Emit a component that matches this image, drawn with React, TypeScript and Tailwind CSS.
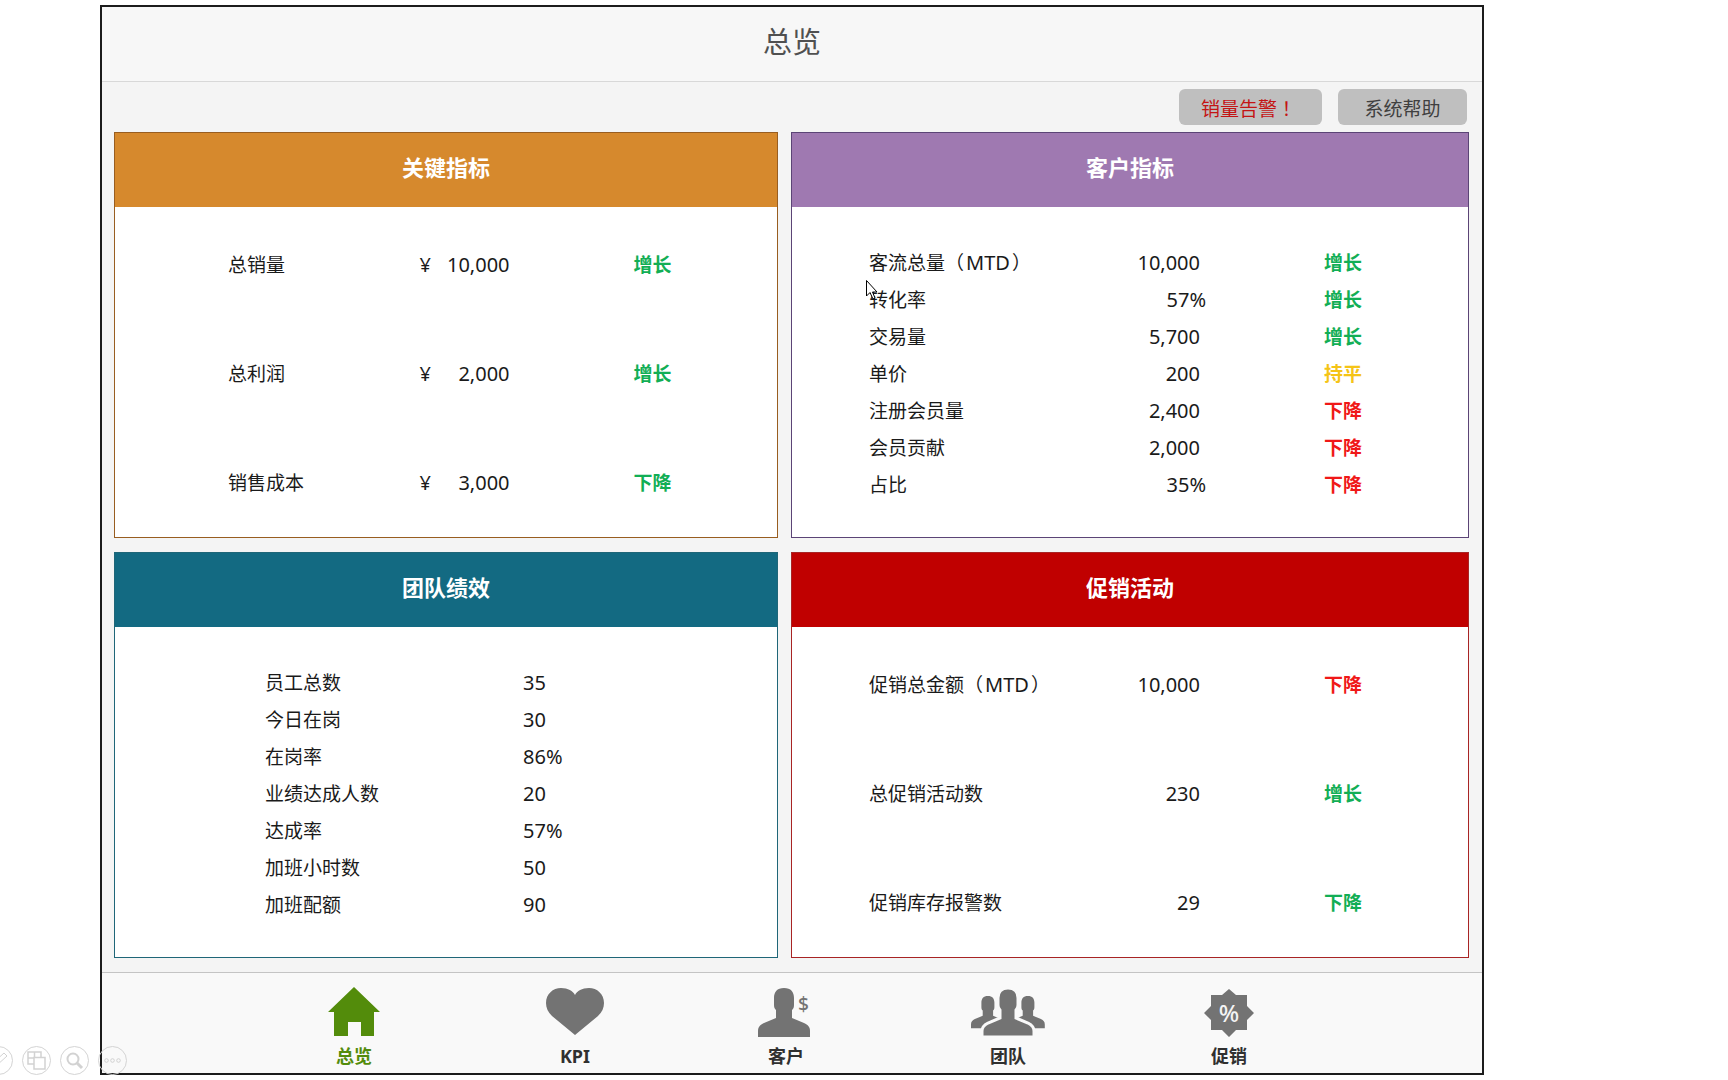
import type { ReactNode } from "react";
import clsx from "clsx";

type Tone = "green" | "yellow" | "red";

interface Metric {
  label: ReactNode;
  value: string;
  trend?: string;
  tone?: Tone;
}

const TONES: Record<Tone, string> = {
  green: "text-[#12ae55]",
  yellow: "text-[#f5c416]",
  red: "text-[#f01818]",
};

const mtd = (text: string) => (
  <>
    {text}（<span className="px-0.5 text-[20px]">MTD</span>）
  </>
);

const KEY_METRICS: Metric[] = [
  { label: "总销量", value: "10,000", trend: "增长", tone: "green" },
  { label: "总利润", value: "2,000", trend: "增长", tone: "green" },
  { label: "销售成本", value: "3,000", trend: "下降", tone: "green" },
];

const CUSTOMER_METRICS: Metric[] = [
  { label: mtd("客流总量"), value: "10,000", trend: "增长", tone: "green" },
  { label: "转化率", value: "57%", trend: "增长", tone: "green" },
  { label: "交易量", value: "5,700", trend: "增长", tone: "green" },
  { label: "单价", value: "200", trend: "持平", tone: "yellow" },
  { label: "注册会员量", value: "2,400", trend: "下降", tone: "red" },
  { label: "会员贡献", value: "2,000", trend: "下降", tone: "red" },
  { label: "占比", value: "35%", trend: "下降", tone: "red" },
];

const TEAM_METRICS: Metric[] = [
  { label: "员工总数", value: "35" },
  { label: "今日在岗", value: "30" },
  { label: "在岗率", value: "86%" },
  { label: "业绩达成人数", value: "20" },
  { label: "达成率", value: "57%" },
  { label: "加班小时数", value: "50" },
  { label: "加班配额", value: "90" },
];

const PROMO_METRICS: Metric[] = [
  { label: mtd("促销总金额"), value: "10,000", trend: "下降", tone: "red" },
  { label: "总促销活动数", value: "230", trend: "增长", tone: "green" },
  { label: "促销库存报警数", value: "29", trend: "下降", tone: "green" },
];

function Card({
  title,
  border,
  header,
  dense,
  children,
}: {
  title: string;
  border: string;
  header: string;
  dense?: boolean;
  children: ReactNode;
}) {
  return (
    <section className={clsx("border bg-white", border)}>
      <h2 className={clsx("flex h-[74px] items-center justify-center pb-1.5 text-[22px] font-bold text-white", header)}>
        {title}
      </h2>
      <div className={dense ? "pt-[37px] pb-[34px]" : "pt-[3px]"}>
        <table className="w-full table-fixed border-collapse text-[19px] leading-7">
          <tbody>{children}</tbody>
        </table>
      </div>
    </section>
  );
}

function Trend({ row, className }: { row: Metric; className: string }) {
  return (
    <td className={clsx("font-bold", className, row.tone && TONES[row.tone])}>{row.trend}</td>
  );
}

function KeyRow({ row }: { row: Metric }) {
  return (
    <tr className="h-[109px]">
      <th scope="row" className="w-[46%] pl-[113px] text-left font-normal">{row.label}</th>
      <td className="w-[90px] text-[20px]">
        <div className="flex justify-between">
          <span>¥</span>
          <span>{row.value}</span>
        </div>
      </td>
      <Trend row={row} className="pl-[124px]" />
    </tr>
  );
}

// Plain numbers leave room for the percent sign's overhang
function NumberRow({ row, height }: { row: Metric; height: string }) {
  return (
    <tr className={height}>
      <th scope="row" className="w-[50%] pl-[77px] text-left font-normal">{row.label}</th>
      <td className={clsx("w-[76px] text-right text-[20px]", !row.value.endsWith("%") && "pr-[6px]")}>
        {row.value}
      </td>
      <Trend row={row} className="pl-[118px]" />
    </tr>
  );
}

function TeamRow({ row }: { row: Metric }) {
  return (
    <tr className="h-[37px]">
      <th scope="row" className="w-[408px] pl-[150px] text-left font-normal">{row.label}</th>
      <td className="text-[20px]">{row.value}</td>
    </tr>
  );
}

const PERSON =
  "M26 0C33 0 36 4 36 10V17C36 20 35 21 34 22V30L46 35C50 37 52 39 52 43V49H0V43C0 39 2 37 6 35L18 30V22C17 21 16 20 16 17V10C16 4 19 0 26 0Z";

function HomeIcon() {
  return (
    <svg viewBox="0 0 52 50" className="h-[50px] w-[52px] fill-[#538c0b]" aria-hidden="true">
      <path d="M26 0 52 25H46V49H33V35H20V49H6V25H0Z" />
    </svg>
  );
}

function HeartIcon() {
  return (
    <svg viewBox="0 0 58 50" className="h-[50px] w-[58px] fill-[#737373]" aria-hidden="true">
      <path d="M29 48 6 29C2 25 0 21 0 16 0 7 7 1 15 1c7 0 12 3 14 7 2-4 7-7 14-7 8 0 15 6 15 15 0 5-2 9-6 13Z" />
    </svg>
  );
}

function CustomerIcon() {
  return (
    <svg viewBox="0 0 56 50" className="h-[50px] w-14 fill-[#737373]" aria-hidden="true">
      <path d={PERSON} transform="translate(0 1)" />
      <text x="40" y="24" fontSize="19" fontWeight="500" fontFamily="Noto Sans">$</text>
    </svg>
  );
}

function TeamIcon() {
  return (
    <svg viewBox="0 0 76 50" className="h-[50px] w-[76px] fill-[#737373]" aria-hidden="true">
      <path d={PERSON} transform="translate(1 9) scale(.65 .66)" />
      <path d={PERSON} transform="translate(41 9) scale(.65 .66)" />
      <path d={PERSON} transform="translate(12 1)" className="stroke-[#f9f9f9]" strokeWidth="3" />
    </svg>
  );
}

function PromoIcon() {
  return (
    <svg viewBox="0 0 50 50" className="h-[50px] w-[50px] fill-[#737373]" aria-hidden="true">
      <path d="M25 2 32 8H43V19L50 26 43 33V43H32L25 50 18 43H7V33L0 26 7 19V8H18Z" />
      <text x="25" y="35" textAnchor="middle" fontSize="24" fontWeight="500" fontFamily="Noto Sans" fill="#f4f4f4">
        %
      </text>
    </svg>
  );
}

const TABS = [
  { label: "总览", icon: <HomeIcon />, active: true },
  { label: "KPI", icon: <HeartIcon /> },
  { label: "客户", icon: <CustomerIcon /> },
  { label: "团队", icon: <TeamIcon /> },
  { label: "促销", icon: <PromoIcon /> },
];

// Faint presenter controls floating over the corner of the page
function PresenterControls() {
  const button = "flex size-[29px] items-center justify-center rounded-full border border-[#d4d4d4]";
  const icon = "size-[19px] fill-none stroke-[#d2d2d2]";
  return (
    <div className="absolute bottom-[5px] -left-4 flex gap-[9px]">
      <button type="button" aria-label="Pen" className={button}>
        <svg viewBox="0 0 19 19" className={icon}>
          <path d="M2 17 4 12 15 2 18 5 7 15Z" />
        </svg>
      </button>
      <button type="button" aria-label="All slides" className={button}>
        <svg viewBox="0 0 19 19" className={icon} strokeWidth="1.5">
          <path d="M7 13H1V1H14V6M1 7H7M7.500 1V6M7 6.500H18V18H7Z" />
        </svg>
      </button>
      <button type="button" aria-label="Zoom" className={button}>
        <svg viewBox="0 0 19 19" className={icon} strokeWidth="2">
          <circle cx="8" cy="8" r="5.500" />
          <path d="M12 12 17 17" strokeWidth="3" />
        </svg>
      </button>
      <button type="button" aria-label="More" className={button}>
        <svg viewBox="0 0 19 19" className={icon}>
          <circle cx="3.500" cy="9.500" r="1.800" />
          <circle cx="9.500" cy="9.500" r="1.800" />
          <circle cx="15.500" cy="9.500" r="1.800" />
        </svg>
      </button>
    </div>
  );
}

export default function App() {
  return (
    <div className="relative min-h-screen overflow-hidden bg-white pt-[5px] pr-[244px] pb-[5px] pl-[100px] font-['Noto_Sans','Noto_Sans_CJK_SC',sans-serif] text-[#1a1a1a]">
      <div className="border-2 border-[#1c1c1c] bg-[#f4f4f4]">
        <header className="flex h-[75px] items-center justify-center border-b border-[#d8d8d8] bg-[#f7f7f7] pb-1">
          <h1 className="text-[29px] leading-10 text-[#505050]">总览</h1>
        </header>

        <main className="pr-[13px] pb-3.5 pl-3">
          <div className="flex justify-end gap-4 py-[7px] pr-0.5 text-[19px]">
            <button type="button" className="h-9 w-[143px] rounded-md bg-[#bfbfbf] pt-1 pr-1 text-[#c41414]">
              销量告警<span className="font-['Noto_Sans_CJK_TC',sans-serif]">！</span>
            </button>
            <button type="button" className="h-9 w-[129px] rounded-md bg-[#bfbfbf] pt-1 text-[#404040]">
              系统帮助
            </button>
          </div>

          <div className="grid grid-cols-[664fr_678fr] gap-x-[13px] gap-y-3.5">
            <Card title="关键指标" border="border-[#985d20]" header="bg-[#d6892d]">
              {KEY_METRICS.map((row, i) => <KeyRow key={i} row={row} />)}
            </Card>
            <Card title="客户指标" border="border-[#5b4476]" header="bg-[#9f79b1]" dense>
              {CUSTOMER_METRICS.map((row, i) => <NumberRow key={i} row={row} height="h-[37px]" />)}
            </Card>
            <Card title="团队绩效" border="border-[#1f6678]" header="bg-[#136a82]" dense>
              {TEAM_METRICS.map((row, i) => <TeamRow key={i} row={row} />)}
            </Card>
            <Card title="促销活动" border="border-[#a82424]" header="bg-[#c00000]">
              {PROMO_METRICS.map((row, i) => <NumberRow key={i} row={row} height="h-[109px]" />)}
            </Card>
          </div>
        </main>

        <nav className="grid grid-cols-[220fr_222fr_200fr_244fr_198fr] border-t border-[#c4c4c4] bg-[#f9f9f9] pt-[14px] pr-[154px] pb-[3px] pl-[142px]">
          {TABS.map((tab) => (
            <a
              key={tab.label}
              href="#"
              className={clsx(
                "flex flex-col items-center gap-1.5 text-[18px] leading-[27px] font-bold",
                tab.active ? "text-[#538c0b]" : "text-[#303030]",
              )}
            >
              {tab.icon}
              {tab.label}
            </a>
          ))}
        </nav>
      </div>

      <PresenterControls />

      {/* Mouse pointer */}
      <svg viewBox="0 0 12 20" className="absolute top-[280px] left-[866px] h-5 w-3 fill-white stroke-black" aria-hidden="true">
        <path d="M.5.500V16L4 12.500 7 19 9 18 6.500 12H11Z" />
      </svg>
    </div>
  );
}
